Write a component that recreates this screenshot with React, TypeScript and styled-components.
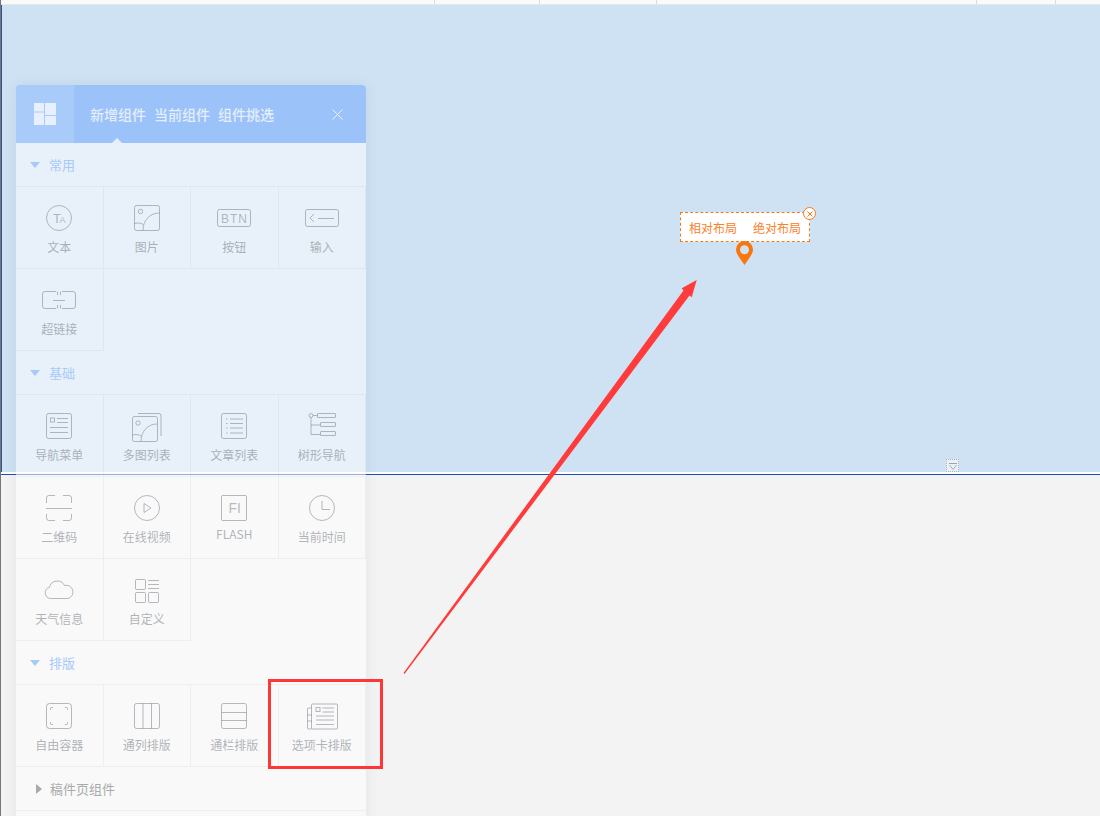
import * as React from "react";
import styled, { createGlobalStyle } from "styled-components";

const GlobalStyle = createGlobalStyle`
  html, body {
    margin: 0;
    padding: 0;
    background: #f3f3f3;
  }
  * {
    box-sizing: border-box;
  }
`;

const FONT = `"Noto Sans CJK SC", "Liberation Sans", sans-serif`;

type Item = { label: string; icon: React.ReactNode; latin?: boolean };

const frame = <rect x="4.5" y="0.5" width="25" height="25" rx="2" />;

const ICONS = {
  text: (
    <>
      <circle cx="17" cy="13" r="12.5" />
      <IconText x="11" y="18" size={13}>T</IconText>
      <IconText x="17.5" y="18" size={9}>A</IconText>
    </>
  ),
  image: (
    <>
      {frame}
      <circle cx="10.5" cy="6.5" r="2.2" />
      <path d="M29.5 8C20 8 13 15 13 25.5M4.5 18.5C8 17.5 12 18 13.5 20" />
    </>
  ),
  button: (
    <>
      <rect x="0.5" y="4.5" width="33" height="17" rx="2" />
      <IconText x="4" y="18" size={12} spacing={1}>BTN</IconText>
    </>
  ),
  input: (
    <>
      <rect x="0.5" y="4.5" width="33" height="17" rx="2" />
      <path d="M9 9L5 13L9 17M13 13.5H29" />
    </>
  ),
  link: (
    <>
      <path d="M14 4.5H3A2.5 2.5 0 0 0 .5 7V19A2.5 2.5 0 0 0 3 21.5H14" />
      <path d="M20 4.5H31A2.5 2.5 0 0 1 33.5 7V19A2.5 2.5 0 0 1 31 21.5H20" />
      <path d="M11 13.5H23M15.5 4.5V8M18.5 18V21.5M15.5 18V21.5M18.5 4.5V8" />
    </>
  ),
  menu: (
    <>
      {frame}
      <rect x="8.5" y="5" width="4" height="4" />
      <path d="M15 5.5H26M15 9.5H26M8 14.5H26M8 19.5H26" />
    </>
  ),
  gallery: (
    <>
      <rect x="2.5" y="3.5" width="25" height="25" rx="2" />
      <path d="M8 .5H29A2 2 0 0 1 31 2.5V23" />
      <circle cx="8" cy="10" r="2.2" />
      <path d="M27 11C18 11 11 18 11 28.5M2.5 22C6 21 10 21.5 11.5 23.5" />
    </>
  ),
  articles: (
    <>
      {frame}
      <path d="M9 6H10.5M13 6H26M9 10.5H10.5M13 10.5H26M9 15H10.5M13 15H26M9 20H10.5M13 20H26" />
    </>
  ),
  tree: (
    <>
      <circle cx="6" cy="2.5" r="2" />
      <rect x="12.5" y="0.5" width="18" height="4" rx="0.5" />
      <rect x="15.5" y="9.5" width="15" height="4" rx="0.5" />
      <rect x="15.5" y="18.5" width="15" height="4" rx="0.5" />
      <path d="M6 4.5V21.5H15.5M6 12H15.5M8 2.5H12.5" />
    </>
  ),
  qr: (
    <path d="M4.5 8V3A2.5 2.5 0 0 1 7 .5H13M21 .5H27A2.5 2.5 0 0 1 29.5 3V8M4 13.5H30M4.5 19V23A2.5 2.5 0 0 0 7 25.5H13M21 25.5H27A2.5 2.5 0 0 0 29.5 23V19" />
  ),
  video: (
    <>
      <circle cx="17" cy="13" r="12.5" />
      <path d="M14 8.5L21 13L14 17.5Z" />
    </>
  ),
  flash: (
    <>
      <rect x="4.5" y="0.5" width="25" height="25" rx="1" />
      <IconText x="11.5" y="18" size={14}>FI</IconText>
    </>
  ),
  clock: (
    <>
      <circle cx="17" cy="13" r="12.5" />
      <path d="M17 6V14.5H25" />
    </>
  ),
  weather: (
    <path d="M9 21.5A5.7 5.7 0 0 1 7.5 10.3A8 8 0 0 1 22.5 8.5A6.6 6.6 0 0 1 26 21.5Z" />
  ),
  custom: (
    <>
      <rect x="5.5" y="2.5" width="10" height="10" rx="1" />
      <rect x="5.5" y="15.5" width="10" height="10" rx="1" />
      <rect x="18.5" y="15.5" width="10" height="10" rx="1" />
      <path d="M18 3.5H29M18 7.5H29M18 11.5H29" />
    </>
  ),
  container: (
    <>
      <rect x="4.5" y="0.5" width="25" height="25" rx="3" />
      <path d="M8.5 7V5.5A1 1 0 0 1 9.5 4.5H11M23 4.5H24.5A1 1 0 0 1 25.5 5.5V7M8.5 19V20.5A1 1 0 0 0 9.5 21.5H11M23 21.5H24.5A1 1 0 0 0 25.5 20.5V19" />
    </>
  ),
  columns: (
    <>
      <rect x="4.5" y="0.5" width="25" height="25" rx="2" />
      <path d="M13 .5V25.5M21.5 .5V25.5" />
    </>
  ),
  rows: (
    <>
      <rect x="4.5" y="0.5" width="25" height="25" rx="2" />
      <path d="M4.5 9.5H29.5M4.5 17.5H29.5" />
    </>
  ),
  tabs: (
    <>
      <rect x="6.5" y="1" width="26" height="25" rx="1" />
      <path d="M6.5 5H3.5A1 1 0 0 0 2.5 6V12H6.5M2.5 12V18H6.5M2.5 18V25A1 1 0 0 0 3.5 26H6.5" />
      <rect x="11" y="4.5" width="4" height="4" />
      <path d="M17.5 5H29M17.5 9H29M11 13H29M11 17H29M11 21.5H29" />
    </>
  ),
};

const SECTIONS: { title: string; items: Item[] }[] = [
  {
    title: "常用",
    items: [
      { label: "文本", icon: ICONS.text },
      { label: "图片", icon: ICONS.image },
      { label: "按钮", icon: ICONS.button },
      { label: "输入", icon: ICONS.input },
      { label: "超链接", icon: ICONS.link },
    ],
  },
  {
    title: "基础",
    items: [
      { label: "导航菜单", icon: ICONS.menu },
      { label: "多图列表", icon: ICONS.gallery },
      { label: "文章列表", icon: ICONS.articles },
      { label: "树形导航", icon: ICONS.tree },
      { label: "二维码", icon: ICONS.qr },
      { label: "在线视频", icon: ICONS.video },
      { label: "FLASH", icon: ICONS.flash, latin: true },
      { label: "当前时间", icon: ICONS.clock },
      { label: "天气信息", icon: ICONS.weather },
      { label: "自定义", icon: ICONS.custom },
    ],
  },
  {
    title: "排版",
    items: [
      { label: "自由容器", icon: ICONS.container },
      { label: "通列排版", icon: ICONS.columns },
      { label: "通栏排版", icon: ICONS.rows },
      { label: "选项卡排版", icon: ICONS.tabs },
    ],
  },
];

const RULER_CELLS = [435, 105, 117, 320, 79];

function IconText({
  x,
  y,
  size,
  spacing = 0,
  children,
}: {
  x: string;
  y: string;
  size: number;
  spacing?: number;
  children: React.ReactNode;
}) {
  return (
    <text
      x={x}
      y={y}
      fontSize={size}
      letterSpacing={spacing}
      fontFamily="Liberation Sans, sans-serif"
      fill="currentColor"
      stroke="none"
    >
      {children}
    </text>
  );
}

export default function App() {
  return (
    <>
      <GlobalStyle />
      <Page>
        <Ruler>
          {RULER_CELLS.map((width) => (
            <RulerCell key={width} $width={width} />
          ))}
        </Ruler>
        <Stage>
          <DropHandle>
            <svg width="12" height="12" viewBox="0 0 12 12">
              <path d="M2 3.5H10" stroke="#9aa3ad" strokeWidth="1" />
              <path d="M2.5 5L6 9.5L9.5 5" stroke="#a9b1ba" strokeWidth="1" fill="none" />
            </svg>
          </DropHandle>
        </Stage>
        <Divider />
        <Lower />

        <LayoutPopup>
          <PopupOption>相对布局</PopupOption>
          <PopupOption>绝对布局</PopupOption>
          <PopupClose>
            <svg width="6" height="6" viewBox="0 0 6 6">
              <path d="M.5 .5L5.5 5.5M5.5 .5L.5 5.5" stroke="#f57a17" strokeWidth="1" />
            </svg>
          </PopupClose>
        </LayoutPopup>
        <Pin viewBox="0 0 17 24" width="17" height="24">
          <path
            fillRule="evenodd"
            fill="#f9760f"
            d="M8.5 0A8.5 8.5 0 0 0 0 8.5C0 13 4.5 18 8.5 24C12.5 18 17 13 17 8.5A8.5 8.5 0 0 0 8.5 0ZM8.5 4.2A4.5 4.5 0 1 1 8.5 13.2A4.5 4.5 0 1 1 8.5 4.2Z"
          />
        </Pin>

        <Panel>
          <PanelHeader>
            <LogoTile>
              <svg width="22" height="22" viewBox="0 0 22 22">
                <path
                  fill="#e7f0fc"
                  d="M0 0H10V8.5H0ZM0 9.5H10V22H0ZM11 0H22V12H11ZM11 13H22V22H11Z"
                />
              </svg>
            </LogoTile>
            <PanelTabs>
              <PanelTab>新增组件</PanelTab>
              <PanelTab>当前组件</PanelTab>
              <PanelTab>组件挑选</PanelTab>
            </PanelTabs>
            <CloseIcon width="11" height="11" viewBox="0 0 11 11">
              <path d="M.5 .5L10.5 10.5M10.5 .5L.5 10.5" stroke="#eaf2fd" strokeWidth="1" />
            </CloseIcon>
            <TabNotch />
          </PanelHeader>

          {SECTIONS.map((section) => (
            <section key={section.title}>
              <SectionTitle>
                <OpenCaret />
                {section.title}
              </SectionTitle>
              <ItemGrid>
                {section.items.map((item) => (
                  <ItemCell key={item.label}>
                    <ItemIcon width="34" height="26" viewBox="0 0 34 26">
                      {item.icon}
                    </ItemIcon>
                    <ItemLabel $latin={item.latin}>{item.label}</ItemLabel>
                  </ItemCell>
                ))}
              </ItemGrid>
            </section>
          ))}

          <CollapsedTitle>
            <ClosedCaret />
            稿件页组件
          </CollapsedTitle>
        </Panel>

        <Highlight />
        <Arrow width="300" height="400" viewBox="0 0 300 400">
          <path
            fill="#ff3b3b"
            d="M3.5 397L283.5 14.5L281.7 12.3L296.7 4L291.7 21.3L289.5 19.5L4.5 398Z"
          />
        </Arrow>
      </Page>
    </>
  );
}

const Page = styled.div`
  position: relative;
  display: flex;
  flex-direction: column;
  width: 1100px;
  height: 816px;
  overflow: hidden;
  font-family: ${FONT};
  background: #f3f3f3;
  border-left: 1px solid #777;
`;

const Ruler = styled.div`
  display: flex;
  height: 5px;
  margin-left: -1px;
  background: #fafafa;
  border-bottom: 1px solid #e8e8e8;
`;

const RulerCell = styled.div<{ $width: number }>`
  width: ${(p) => p.$width}px;
  border-right: 1px solid #dcdcdc;
`;

const Stage = styled.div`
  position: relative;
  height: 467px;
  margin-left: -1px;
  background: #cfe2f3;
  border-left: 2px solid #2b5597;
`;

const DropHandle = styled.div`
  position: absolute;
  right: 141px;
  bottom: 0;
  width: 13px;
  height: 13px;
  background: #e9f1f8;
  border: 1px dotted #aab4be;
  line-height: 0;
`;

const Divider = styled.div`
  height: 3px;
  margin-left: -1px;
  background: #fff;
  border-bottom: 1px solid #1f51b4;
`;

const Lower = styled.div`
  flex: 1;
  background: #f3f3f3;
`;

const LayoutPopup = styled.div`
  position: absolute;
  left: 679px;
  top: 212px;
  width: 130px;
  height: 30px;
  display: flex;
  align-items: center;
  justify-content: space-between;
  padding: 0 8px;
  background: #fff;
  border: 1px dashed #f57a17;
`;

const PopupOption = styled.span`
  font-size: 12px;
  color: #f9822b;
`;

const PopupClose = styled.span`
  position: absolute;
  top: -6px;
  right: -7px;
  width: 13px;
  height: 13px;
  display: flex;
  align-items: center;
  justify-content: center;
  border-radius: 50%;
  background: #fff;
  border: 1px solid #f57a17;
`;

const Pin = styled.svg`
  position: absolute;
  left: 735px;
  top: 241px;
`;

const Panel = styled.div`
  position: absolute;
  left: 15px;
  top: 85px;
  width: 350px;
  height: 760px;
  background: rgba(255, 255, 255, 0.52);
  border-radius: 4px 4px 0 0;
  box-shadow: 0 0 14px rgba(60, 80, 110, 0.09);
`;

const PanelHeader = styled.header`
  position: relative;
  display: flex;
  align-items: center;
  height: 58px;
  background: #9bc2f9;
  border-radius: 4px 4px 0 0;
`;

const LogoTile = styled.div`
  display: flex;
  align-items: center;
  justify-content: center;
  width: 58px;
  height: 100%;
  background: #a8cbfa;
  border-radius: 4px 0 0 0;
`;

const PanelTabs = styled.nav`
  display: flex;
  gap: 8px;
  margin-left: 16px;
`;

const PanelTab = styled.span`
  font-size: 14px;
  font-weight: 500;
  color: #e4eefb;
`;

const CloseIcon = styled.svg`
  margin-left: auto;
  margin-right: 23px;
`;

const TabNotch = styled.span`
  position: absolute;
  left: 96px;
  bottom: 0;
  border-left: 5px solid transparent;
  border-right: 5px solid transparent;
  border-bottom: 5px solid #e6eff9;
`;

const SectionTitle = styled.h3`
  display: flex;
  align-items: center;
  height: 43px;
  margin: 0;
  padding-left: 14px;
  font-size: 13px;
  font-weight: 400;
  color: #a6caf9;
`;

const OpenCaret = styled.i`
  width: 0;
  height: 0;
  margin-right: 9px;
  margin-top: 1px;
  border-left: 5px solid transparent;
  border-right: 5px solid transparent;
  border-top: 6px solid #a6caf9;
`;

const ItemGrid = styled.div`
  display: grid;
  grid-template-columns: repeat(4, 1fr);
  border-top: 1px solid rgba(90, 110, 140, 0.08);
`;

const ItemCell = styled.div`
  display: flex;
  flex-direction: column;
  align-items: center;
  height: 82px;
  padding-top: 18px;
  border-right: 1px solid rgba(90, 110, 140, 0.08);
  border-bottom: 1px solid rgba(90, 110, 140, 0.08);
`;

const ItemIcon = styled.svg`
  display: block;
  overflow: visible;
  fill: none;
  stroke: currentColor;
  stroke-width: 1;
  color: rgba(125, 130, 140, 0.55);
`;

const ItemLabel = styled.span<{ $latin?: boolean }>`
  margin-top: ${(p) => (p.$latin ? "4px" : "7px")};
  font-size: 12px;
  line-height: 17px;
  color: rgba(120, 125, 135, 0.58);
`;

const CollapsedTitle = styled.div`
  display: flex;
  align-items: center;
  height: 44px;
  padding-left: 20px;
  font-size: 13px;
  color: #aaa;
  border-bottom: 1px solid rgba(90, 110, 140, 0.08);
`;

const ClosedCaret = styled.i`
  width: 0;
  height: 0;
  margin-right: 8px;
  border-top: 5.5px solid transparent;
  border-bottom: 5.5px solid transparent;
  border-left: 6px solid #aaa;
`;

const Highlight = styled.div`
  position: absolute;
  left: 267px;
  top: 679px;
  width: 115px;
  height: 90px;
  border: 3px solid #ff3636;
`;

const Arrow = styled.svg`
  position: absolute;
  left: 399px;
  top: 276px;
`;
